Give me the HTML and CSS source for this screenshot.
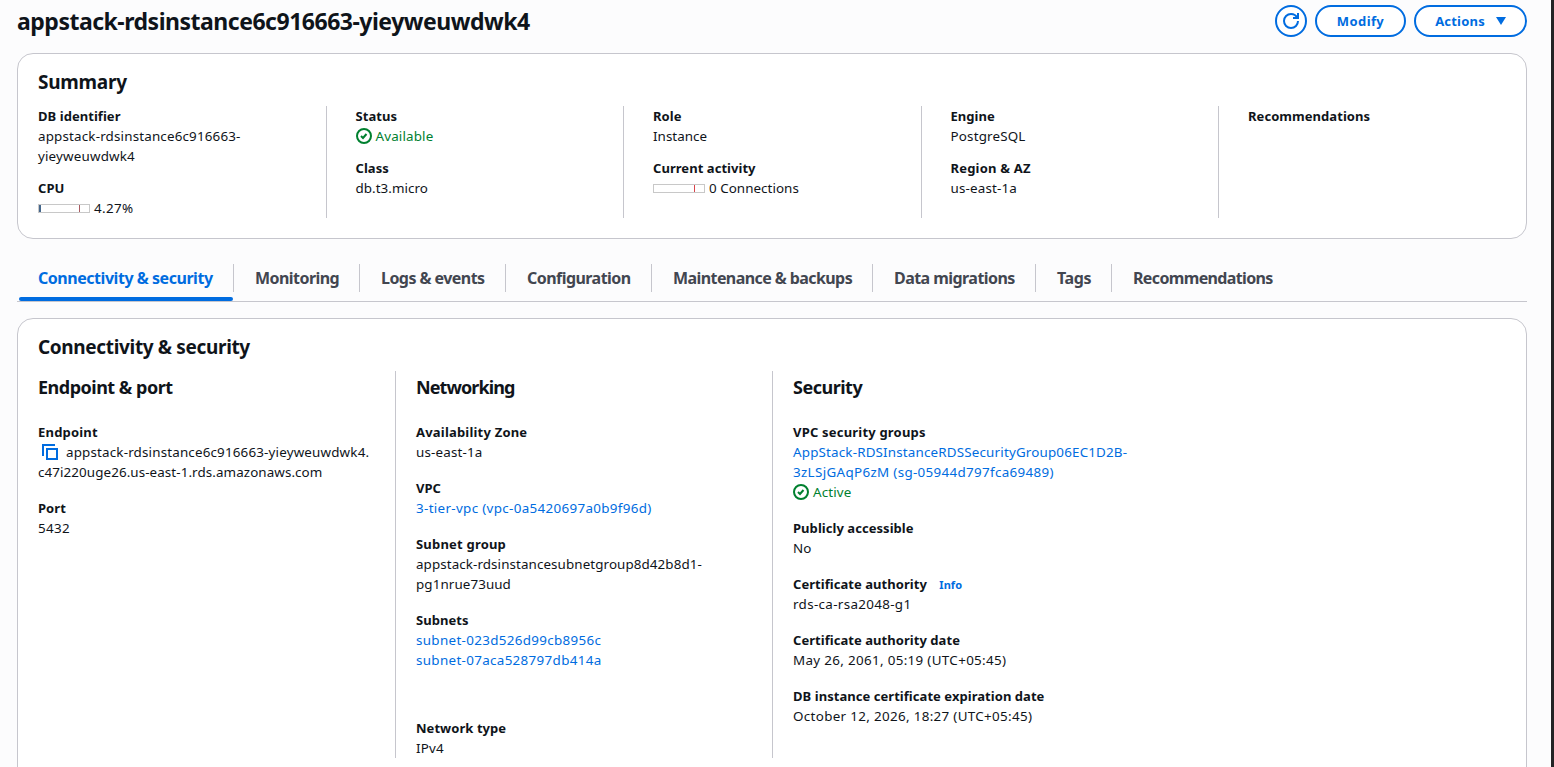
FILE: index.html
```html
<!DOCTYPE html>
<html lang="en">
<head>
<meta charset="utf-8">
<title>RDS database details</title>
<link rel="stylesheet" href="styles.css">
</head>
<body>
<main class="page">
  <header class="header">
    <h1 class="header-title">appstack-rdsinstance6c916663-yieyweuwdwk4</h1>
    <div class="actions">
      <button class="btn btn-icon" aria-label="Refresh">
        <svg class="icon" viewBox="0 0 16 16"><path d="M15 8c0 3.87-3.13 7-7 7s-7-3.13-7-7 3.13-7 7-7c2.79 0 5.2 1.63 6.33 4M10 5h5V0"/></svg>
      </button>
      <button class="btn btn-modify">Modify</button>
      <button class="btn btn-actions">Actions <svg class="caret" viewBox="0 0 10 8"><path d="M0 0h10L5 8z"/></svg></button>
    </div>
  </header>

  <section class="card summary">
    <h2 class="card-title">Summary</h2>
    <div class="summary-grid">
      <div class="summary-col">
        <dl class="pair"><dt>DB identifier</dt><dd>appstack-rdsinstance6c916663-<br>yieyweuwdwk4</dd></dl>
        <dl class="pair"><dt>CPU</dt><dd class="metric wide"><span class="meter meter-cpu"></span>4.27%</dd></dl>
      </div>
      <div class="summary-col">
        <dl class="pair"><dt>Status</dt><dd class="status"><svg class="icon" viewBox="0 0 16 16"><circle cx="8" cy="8" r="7"/><path d="M5 8l2 2 3.5-4"/></svg>Available</dd></dl>
        <dl class="pair"><dt>Class</dt><dd class="snug">db.t3.micro</dd></dl>
      </div>
      <div class="summary-col">
        <dl class="pair"><dt>Role</dt><dd class="snug">Instance</dd></dl>
        <dl class="pair"><dt>Current activity</dt><dd class="metric snug"><span class="meter"></span>0 Connections</dd></dl>
      </div>
      <div class="summary-col">
        <dl class="pair"><dt>Engine</dt><dd>PostgreSQL</dd></dl>
        <dl class="pair"><dt class="loose">Region &amp; AZ</dt><dd>us-east-1a</dd></dl>
      </div>
      <div class="summary-col">
        <dl class="pair"><dt>Recommendations</dt></dl>
      </div>
    </div>
  </section>

  <nav class="tabs">
    <a class="tab tab-connectivity tab-active">Connectivity &amp; security</a>
    <a class="tab tab-monitoring">Monitoring</a>
    <a class="tab tab-logs">Logs &amp; events</a>
    <a class="tab tab-configuration">Configuration</a>
    <a class="tab tab-maintenance">Maintenance &amp; backups</a>
    <a class="tab tab-migrations">Data migrations</a>
    <a class="tab tab-tags">Tags</a>
    <a class="tab tab-recommendations">Recommendations</a>
  </nav>

  <section class="card details">
    <h2 class="card-title">Connectivity &amp; security</h2>
    <div class="details-grid">
      <div class="details-col">
        <h3 class="col-title">Endpoint &amp; port</h3>
        <dl class="pair"><dt class="loose">Endpoint</dt><dd><span class="endpoint"><svg class="icon icon-copy" viewBox="0 0 16 16"><path d="M1 12V1h12M5 5h10v10H5z"/></svg>appstack-rdsinstance6c916663-yieyweuwdwk4.</span><br><span class="mid">c47i220uge26.us-east-1.rds.amazonaws.com</span></dd></dl>
        <dl class="pair"><dt>Port</dt><dd class="wide">5432</dd></dl>
      </div>
      <div class="details-col">
        <h3 class="col-title col-title-networking">Networking</h3>
        <dl class="pair"><dt class="loose">Availability Zone</dt><dd>us-east-1a</dd></dl>
        <dl class="pair"><dt>VPC</dt><dd class="wide"><a class="link">3-tier-vpc (vpc-0a5420697a0b9f96d)</a></dd></dl>
        <dl class="pair"><dt class="loose">Subnet group</dt><dd class="mid">appstack-rdsinstancesubnetgroup8d42b8d1-<br>pg1nrue73uud</dd></dl>
        <dl class="pair pair-subnets"><dt>Subnets</dt><dd class="wide"><a class="link">subnet-023d526d99cb8956c</a><br><a class="link">subnet-07aca528797db414a</a></dd></dl>
        <dl class="pair"><dt>Network type</dt><dd>IPv4</dd></dl>
      </div>
      <div class="details-col">
        <h3 class="col-title">Security</h3>
        <dl class="pair"><dt class="loose">VPC security groups</dt><dd><a class="link">AppStack-RDSInstanceRDSSecurityGroup06EC1D2B-<br><span class="wide">3zLSjGAqP6zM (sg-05944d797fca69489)</span></a></dd><dd class="status"><svg class="icon" viewBox="0 0 16 16"><circle cx="8" cy="8" r="7"/><path d="M5 8l2 2 3.5-4"/></svg>Active</dd></dl>
        <dl class="pair"><dt>Publicly accessible</dt><dd>No</dd></dl>
        <dl class="pair"><dt>Certificate authority <a class="info">Info</a></dt><dd class="wide">rds-ca-rsa2048-g1</dd></dl>
        <dl class="pair"><dt>Certificate authority date</dt><dd class="wide">May 26, 2061, 05:19 (UTC+05:45)</dd></dl>
        <dl class="pair"><dt>DB instance certificate expiration date</dt><dd class="wide">October 12, 2026, 18:27 (UTC+05:45)</dd></dl>
      </div>
    </div>
  </section>
</main>
</body>
</html>
```
FILE: styles.css
```css
* { box-sizing: border-box; }

body {
  margin: 0;
  height: 767px;
  overflow: hidden;
  background: #fcfcfd;
  color: #0f141a;
  font: 13px/20px "Noto Sans", "Open Sans", sans-serif;
}

h1, h2, h3, dl, dd { margin: 0; }

.page {
  height: 767px;
  overflow: hidden;
  padding: 5px 24px 0 17px;
  border-right: 3px solid #232325;
}

.header {
  display: flex;
  justify-content: space-between;
  height: 32px;
}

.header-title {
  font-size: 23px;
  line-height: 33px;
  letter-spacing: -0.49px;
}

.actions { display: flex; gap: 8px; }

.btn {
  display: flex;
  align-items: center;
  justify-content: center;
  height: 32px;
  padding: 0;
  border: 2px solid #006ce0;
  border-radius: 16px;
  background: #fff;
  color: #006ce0;
  font: 700 13px/20px "Noto Sans", sans-serif;
}

.btn-icon { width: 32px; }
.btn-modify { width: 91px; letter-spacing: 0.4px; }
.btn-actions { width: 113px; gap: 11px; letter-spacing: 0.2px; }

.icon {
  flex: none;
  width: 16px;
  height: 16px;
  fill: none;
  stroke: currentColor;
  stroke-width: 2;
}

.icon-copy { color: #006ce0; }

.caret { width: 10px; height: 8px; fill: currentColor; }

.card {
  border: 1px solid #c6c6cd;
  border-radius: 16px;
  background: #fff;
}

.summary { height: 186px; margin-top: 16px; padding-top: 16px; }

.card-title {
  margin-left: 20px;
  font-size: 19px;
  line-height: 24px;
  letter-spacing: -0.35px;
}

.summary .card-title { letter-spacing: -0.25px; }

.summary-grid {
  display: grid;
  grid-template-columns: repeat(5, 297.5px);
  height: 112px;
  margin: 12px 0 0 10px;
}

.summary-col {
  display: flex;
  flex-direction: column;
  gap: 12px;
  padding-left: 29px;
  border-left: 1px solid #c6c6cd;
}

.summary-col:first-child { padding-left: 10px; border-left: 0; }

dt { font-weight: 700; letter-spacing: 0.05px; }
.loose { letter-spacing: 0.2px; }
dd { font-size: 13.4px; letter-spacing: 0.17px; }
.snug { letter-spacing: 0.04px; }
.mid { letter-spacing: 0.09px; }
.wide { letter-spacing: 0.33px; }

.status { display: flex; align-items: center; gap: 4px; color: #00802f; letter-spacing: 0.15px; }

.metric { display: flex; align-items: center; gap: 4px; }

.meter {
  width: 52px;
  height: 9px;
  border: 1px solid #c8c8c8;
  background: linear-gradient(90deg, transparent 40px, #d9434a 40px 41px, transparent 41px);
}

.meter-cpu {
  background: linear-gradient(90deg, #45678c 2px, transparent 2px 40px, #a85a60 40px 41px, transparent 41px);
}

.tabs {
  display: flex;
  align-items: flex-start;
  height: 38px;
  margin-top: 25px;
  border-bottom: 1px solid #c6c6cd;
}

.tab {
  height: 28px;
  padding-left: 21px;
  border-right: 1px solid #c6c6cd;
  color: #424650;
  font-size: 16px;
  font-weight: 700;
  line-height: 28px;
  letter-spacing: -0.55px;
  white-space: nowrap;
}

.tab-active { position: relative; color: #006ce0; }

.tab-active::after {
  content: "";
  position: absolute;
  left: 2px;
  right: 0;
  bottom: -9px;
  height: 4px;
  border-radius: 2px;
  background: #006ce0;
}

.tab-connectivity { width: 217px; letter-spacing: -0.46px; }
.tab-monitoring { width: 126px; }
.tab-logs { width: 146px; }
.tab-configuration { width: 146px; }
.tab-maintenance { width: 221px; letter-spacing: -0.58px; }
.tab-migrations { width: 163px; }
.tab-tags { width: 76px; letter-spacing: -0.4px; }
.tab-recommendations { border-right: 0; letter-spacing: -0.64px; }

.details { height: 480px; margin-top: 16px; padding-top: 16px; }

.details-grid {
  display: grid;
  grid-template-columns: repeat(3, 377px) 1fr;
  height: 387px;
  margin-top: 12px;
}

.details-col {
  display: flex;
  flex-direction: column;
  gap: 16px;
  padding: 4px 0 0 20px;
  border-left: 1px solid #c6c6cd;
}

.details-col:first-child { border-left-color: transparent; padding-left: 19px; }

.col-title {
  margin-bottom: 7px;
  font-size: 18px;
  line-height: 24px;
  letter-spacing: -0.5px;
}

.col-title-networking { letter-spacing: -0.9px; }

.pair-subnets { margin-bottom: 32px; }
.link, .info { color: #006ce0; }
.info { margin-left: 9px; font-size: 11px; line-height: 1; }

.endpoint { display: inline-flex; align-items: center; gap: 8px; margin-left: 4px; vertical-align: top; }
```
